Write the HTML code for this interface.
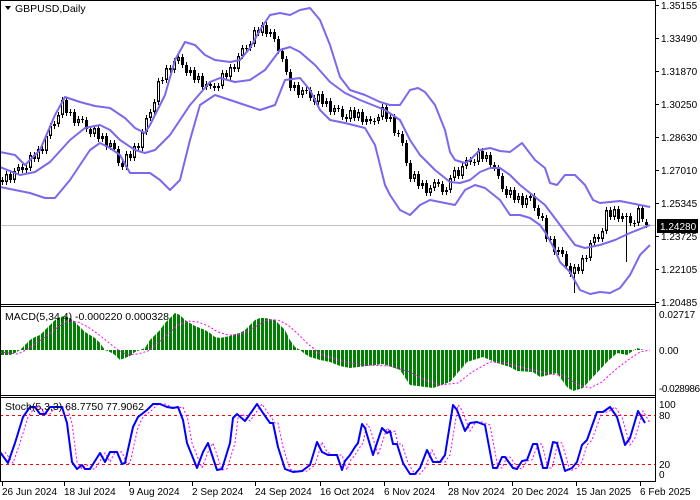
<!DOCTYPE html>
<html><head><meta charset="utf-8"><style>
html,body{margin:0;padding:0;background:#fff;}
svg{display:block;font-family:"Liberation Sans",sans-serif;}
</style></head><body>
<svg width="700" height="500" xmlns="http://www.w3.org/2000/svg">
<defs>
<pattern id="hp" patternUnits="userSpaceOnUse" x="1" y="0" width="4" height="500"><rect x="0" y="0" width="3" height="500" fill="#008000"/></pattern>
<clipPath id="cm"><rect x="0" y="307" width="655" height="88"/></clipPath>
<clipPath id="cs"><rect x="0" y="398" width="655" height="83"/></clipPath>
<clipPath id="cp"><rect x="0" y="1" width="655" height="303"/></clipPath>
</defs>
<rect width="700" height="500" fill="#fff"/>
<!-- ticks -->
<path d="M2.5 481V486M64.5 481V486M129.5 481V486M192.5 481V486M255.5 481V486M320.5 481V486M384.5 481V486M448.5 481V486M512.5 481V486M576.5 481V486M640.5 481V486M655 5.5H659M655 38.5H659M655 71.5H659M655 104.5H659M655 137.5H659M655 170.5H659M655 203.5H659M655 236.5H659M655 269.5H659M655 302.5H659" stroke="#000"/>
<line x1="0" y1="225.5" x2="655" y2="225.5" stroke="#c0c0c0"/>
<line x1="0" y1="415.5" x2="655" y2="415.5" stroke="#f00" stroke-dasharray="3,3"/>
<line x1="0" y1="464.5" x2="655" y2="464.5" stroke="#f00" stroke-dasharray="3,3"/>
<g clip-path="url(#cp)">
<!-- wicks -->
<path stroke="#000" stroke-width="1" fill="none" d="M2.5 177V185M6.5 171V185M10.5 171V183M14.5 168V183M18.5 164V174M22.5 164V173M26.5 165V173M30.5 152V171M34.5 152V162M38.5 146V162M42.5 146V154M46.5 133V154M50.5 123V139M54.5 121V129M58.5 112V127M62.5 97V118M66.5 97V116M70.5 109V116M74.5 109V126M78.5 116V126M82.5 116V123M86.5 117V132M90.5 126V137M94.5 125V137M98.5 125V142M102.5 133V142M106.5 133V150M110.5 140V150M114.5 140V152M118.5 146V166M122.5 160V170M126.5 151V170M130.5 151V161M134.5 143V161M138.5 143V151M142.5 129V151M146.5 115V135M150.5 109V121M154.5 99V115M158.5 78V105M162.5 77V84M166.5 65V83M170.5 65V73M174.5 58V73M178.5 54V64M182.5 54V68M186.5 62V76M190.5 67V76M194.5 67V83M198.5 73V83M202.5 73V90M206.5 81V90M210.5 81V89M214.5 83V91M218.5 83V91M222.5 70V89M226.5 70V80M230.5 64V80M234.5 64V72M238.5 53V72M242.5 45V59M246.5 45V52M250.5 41V51M254.5 27V47M258.5 27V36M262.5 22V36M266.5 22V37M270.5 29V37M274.5 29V42M278.5 36V54M282.5 48V62M286.5 56V75M290.5 69V91M294.5 82V91M298.5 82V98M302.5 87V98M306.5 87V94M310.5 87V101M314.5 95V105M318.5 91V105M322.5 91V107M326.5 98V107M330.5 98V115M334.5 105V115M338.5 105V112M342.5 106V120M346.5 114V122M350.5 107V122M354.5 107V121M358.5 109V121M362.5 109V125M366.5 116V125M370.5 116V124M374.5 118V125M378.5 114V124M382.5 104V120M386.5 104V122M390.5 114V122M394.5 114V136M398.5 130V137M402.5 131V146M406.5 140V166M410.5 160V182M414.5 171V182M418.5 171V189M422.5 180V189M426.5 180V196M430.5 185V196M434.5 179V191M438.5 179V187M442.5 181V195M446.5 187V195M450.5 175V193M454.5 167V181M458.5 167V179M462.5 163V179M466.5 157V169M470.5 157V165M474.5 159V166M478.5 148V165M482.5 148V162M486.5 152V162M490.5 152V168M494.5 162V171M498.5 165V179M502.5 173V192M506.5 186V198M510.5 187V198M514.5 187V203M518.5 193V203M522.5 193V208M526.5 195V208M530.5 193V201M534.5 193V211M538.5 205V219M542.5 213V221M546.5 215V242M550.5 236V243M554.5 236V255M558.5 247V255M562.5 247V257M566.5 251V269M570.5 263V277M574.5 264V293M578.5 264V274M582.5 255V274M586.5 255V262M590.5 240V261M594.5 234V246M598.5 234V242M602.5 228V242M606.5 207V234M610.5 207V220M614.5 206V220M618.5 206V222M622.5 213V222M626.5 213V262M630.5 213V226M634.5 220V227M638.5 205V226M642.5 205V222M646.5 219V228"/>
<!-- black bodies -->
<path stroke="#000" stroke-width="3" fill="none" d="M2.5 180V182M10.5 174V180M22.5 167V170M34.5 155V159M42.5 149V151M66.5 100V113M74.5 112V123M82.5 119V120M86.5 120V129M90.5 129V134M98.5 128V139M106.5 136V147M114.5 143V149M118.5 149V163M122.5 163V167M130.5 154V158M138.5 146V148M170.5 68V70M182.5 57V65M186.5 65V73M194.5 70V80M202.5 76V87M210.5 84V86M214.5 86V88M226.5 73V77M234.5 67V69M246.5 48V49M258.5 30V33M266.5 25V34M274.5 32V39M278.5 39V51M282.5 51V59M286.5 59V72M290.5 72V88M298.5 85V95M306.5 90V91M310.5 90V98M314.5 98V102M322.5 94V104M330.5 101V112M338.5 108V109M342.5 109V117M346.5 117V119M354.5 110V118M362.5 112V122M370.5 119V121M374.5 121V122M386.5 107V119M394.5 117V133M398.5 133V134M402.5 134V143M406.5 143V163M410.5 163V179M418.5 174V186M426.5 183V193M438.5 182V184M442.5 184V192M458.5 170V176M470.5 160V162M474.5 162V163M482.5 151V159M490.5 155V165M494.5 165V168M498.5 168V176M502.5 176V189M506.5 189V195M514.5 190V200M522.5 196V205M534.5 196V208M538.5 208V216M542.5 216V218M546.5 218V239M550.5 239V240M554.5 239V252M562.5 250V254M566.5 254V266M570.5 266V274M578.5 267V271M586.5 258V259M598.5 237V239M610.5 210V217M618.5 209V219M626.5 216V217M630.5 216V223M634.5 223V224M642.5 208V219"/>
<!-- white bodies -->
<path id="wb" stroke="#000" stroke-width="3" fill="none" d="M6.5 174V182M14.5 171V180M18.5 167V171M26.5 168V170M30.5 155V168M38.5 149V159M46.5 136V151M50.5 126V136M54.5 124V126M58.5 115V124M62.5 100V115M70.5 112V113M78.5 119V123M94.5 128V134M102.5 136V139M110.5 143V147M126.5 154V167M134.5 146V158M142.5 132V148M146.5 118V132M150.5 112V118M154.5 102V112M158.5 81V102M162.5 80V81M166.5 68V80M174.5 61V70M178.5 57V61M190.5 70V73M198.5 76V80M206.5 84V87M218.5 86V88M222.5 73V86M230.5 67V77M238.5 56V69M242.5 48V56M250.5 44V48M254.5 30V44M262.5 25V33M270.5 32V34M294.5 85V88M302.5 90V95M318.5 94V102M326.5 101V104M334.5 108V112M350.5 110V119M358.5 112V118M366.5 119V122M378.5 117V121M382.5 107V117M390.5 117V119M414.5 174V179M422.5 183V186M430.5 188V193M434.5 182V188M446.5 190V192M450.5 178V190M454.5 170V178M462.5 166V176M466.5 160V166M478.5 151V162M486.5 155V159M510.5 190V195M518.5 196V200M526.5 198V205M530.5 196V198M558.5 250V252M574.5 267V274M582.5 258V271M590.5 243V258M594.5 237V243M602.5 231V239M606.5 210V231M614.5 209V217M622.5 216V219M638.5 208V223M646.5 222V225"/>
<path stroke="#fff" stroke-width="1" fill="none" d="M6.5 175.5V180.5M14.5 172.5V178.5M18.5 168.5V169.5M30.5 156.5V166.5M38.5 150.5V157.5M46.5 137.5V149.5M50.5 127.5V134.5M58.5 116.5V122.5M62.5 101.5V113.5M78.5 120.5V121.5M94.5 129.5V132.5M102.5 137.5V137.5M110.5 144.5V145.5M126.5 155.5V165.5M134.5 147.5V156.5M142.5 133.5V146.5M146.5 119.5V130.5M150.5 113.5V116.5M154.5 103.5V110.5M158.5 82.5V100.5M166.5 69.5V78.5M174.5 62.5V68.5M178.5 58.5V59.5M190.5 71.5V71.5M198.5 77.5V78.5M206.5 85.5V85.5M222.5 74.5V84.5M230.5 68.5V75.5M238.5 57.5V67.5M242.5 49.5V54.5M250.5 45.5V46.5M254.5 31.5V42.5M262.5 26.5V31.5M294.5 86.5V86.5M302.5 91.5V93.5M318.5 95.5V100.5M326.5 102.5V102.5M334.5 109.5V110.5M350.5 111.5V117.5M358.5 113.5V116.5M366.5 120.5V120.5M378.5 118.5V119.5M382.5 108.5V115.5M414.5 175.5V177.5M422.5 184.5V184.5M430.5 189.5V191.5M434.5 183.5V186.5M450.5 179.5V188.5M454.5 171.5V176.5M462.5 167.5V174.5M466.5 161.5V164.5M478.5 152.5V160.5M486.5 156.5V157.5M510.5 191.5V193.5M518.5 197.5V198.5M526.5 199.5V203.5M574.5 268.5V272.5M582.5 259.5V269.5M590.5 244.5V256.5M594.5 238.5V241.5M602.5 232.5V237.5M606.5 211.5V229.5M614.5 210.5V215.5M622.5 217.5V217.5M638.5 209.5V221.5M646.5 223.5V223.5"/>
<!-- bands -->
<g fill="none" stroke="#7b68ee" stroke-width="2" stroke-linejoin="round">
<polyline points="0,152 15,155 25,165 40,150 55,115 65,97 80,102 95,106 110,108 125,118 135,128 145,133 150,125 165,95 175,60 185,42 195,45 205,55 215,60 230,62 240,60 250,48 260,30 270,15 280,13 290,15 300,10 310,8 320,20 330,45 340,77 350,90 365,95 380,102 390,105 400,105 410,90 418,88 425,92 435,105 445,130 450,152 455,160 465,163 470,160 480,150 490,148 500,151 510,152 522,143 535,160 545,168 550,183 557,185 565,175 575,175 585,185 593,200 600,203 610,202 620,201 630,203 650,207"/>
<polyline points="0,167 20,175 35,172 50,162 70,140 85,128 100,125 110,130 120,140 135,150 145,153 155,150 170,135 190,105 210,82 220,78 235,82 250,80 265,70 280,50 290,47 300,52 315,65 330,82 345,93 360,100 375,106 385,110 400,120 410,140 420,155 435,170 450,182 460,183 470,180 480,172 490,168 500,168 510,175 520,185 530,193 545,205 560,225 575,245 585,248 600,245 615,240 630,233 650,225"/>
<polyline points="0,187 15,190 30,193 45,198 55,198 70,180 90,150 100,143 110,148 120,155 130,173 150,173 160,180 170,190 180,180 190,140 200,105 215,95 230,100 245,105 260,110 275,105 285,80 300,78 310,90 320,110 330,120 345,123 365,128 375,145 380,165 385,185 390,195 400,210 410,215 420,205 430,200 440,202 455,205 465,190 475,185 485,188 500,200 510,215 520,215 530,218 540,225 545,232 555,250 560,262 570,272 580,290 590,294 600,292 610,293 620,288 630,275 640,255 650,245"/>
</g>
</g>
<!-- MACD -->
<g clip-path="url(#cm)">
<polygon fill="url(#hp)" fill-rule="evenodd" points="1,350 1,355 10,355 15,353 20,350 25,345 30,340 35,337 40,335 45,330 50,325 55,320 60,317 65,316 70,318 75,322 80,327 85,332 90,335 95,338 100,343 105,350 110,352 115,355 120,360 125,358 130,356 135,352 140,350 145,348 150,340 155,335 160,330 165,323 170,318 175,313 180,315 185,320 190,323 195,326 200,328 205,330 210,333 215,337 220,338 230,336 235,334 240,333 245,330 250,325 255,320 260,318 265,318 270,319 275,320 280,325 285,330 290,340 295,347 300,350 305,354 310,357 320,360 330,362 340,366 350,368 383,364 400,370 410,385 433,388 450,382 467,362 483,357 497,363 510,367 517,371 533,372 540,377 557,373 567,387 573,391 583,388 593,377 607,362 617,353 627,355 637,348 644,350"/>
<polyline fill="none" stroke="#ff00ff" stroke-width="1" stroke-dasharray="2,2" points="0,352 18,354 28,349 38,342 48,335 58,327 68,321 78,322 88,327 98,334 108,342 118,350 128,355 138,354 148,351 158,343 168,334 178,325 188,321 198,322 208,326 218,332 228,335 238,335 248,331 258,325 268,320 278,320 288,325 298,334 308,344 318,352 328,357 338,360 350,363 365,365 390,366 410,372 425,380 440,385 458,383 472,372 490,362 505,363 520,367 538,371 550,374 565,376 578,385 590,388 602,382 615,370 628,360 640,352 650,350"/>
</g>
<!-- Stoch -->
<g clip-path="url(#cs)">
<polyline fill="none" stroke="#ff00ff" stroke-width="1" stroke-dasharray="2,2" points="5,452 13,463 20,443 28,417 35,407 40,407 45,414 50,414 55,407 67,407 72,423 77,462 82,469 87,465 90,469 95,469 105,453 110,462 115,452 122,452 127,464 130,463 138,427 143,417 152,410 158,404 165,404 172,407 178,408 183,407 188,420 192,443 202,468 208,452 213,443 222,470 227,469 235,443 238,418 242,414 250,421 253,417 262,404 268,413 275,423 278,423 283,447 290,469 298,472 307,471 315,465 322,442 327,452 333,455 342,455 347,470 350,461 355,455 360,447 363,443 367,424 370,428 378,455 387,428 392,433 395,431 398,444 402,444 408,463 415,474 420,474 425,468 432,450 438,462 445,462 450,455 458,405 462,410 470,431 475,423 482,422 490,425 498,468 502,468 507,457 510,457 518,468 522,469 527,461 532,460 538,444 542,444 548,468 552,468 558,442 562,443 570,471 577,468 582,462 587,445 592,440 602,412 608,412 615,407 622,417 630,445 635,438 643,411 650,423"/>
<polyline fill="none" stroke="#0000ff" stroke-width="2" stroke-linejoin="round" points="0,452 8,463 15,443 23,417 30,407 35,407 40,414 45,414 50,407 62,407 67,423 72,462 77,469 82,465 85,469 90,469 100,453 105,462 110,452 117,452 122,464 125,463 133,427 138,417 147,410 153,404 160,404 167,407 173,408 178,407 183,420 187,443 197,468 203,452 208,443 217,470 222,469 230,443 233,418 237,414 245,421 248,417 257,404 263,413 270,423 273,423 278,447 285,469 293,472 302,471 310,465 317,442 322,452 328,455 337,455 342,470 345,461 350,455 355,447 358,443 362,424 365,428 373,455 382,428 387,433 390,431 393,444 397,444 403,463 410,474 415,474 420,468 427,450 433,462 440,462 445,455 453,405 457,410 465,431 470,423 477,422 485,425 493,468 497,468 502,457 505,457 513,468 517,469 522,461 527,460 533,444 537,444 543,468 547,468 553,442 557,443 565,471 572,468 577,462 582,445 587,440 597,412 603,412 610,407 617,417 625,445 630,438 638,411 645,423"/>
</g>
<!-- frames -->
<line x1="0.5" y1="0" x2="0.5" y2="481" stroke="#000"/>
<line x1="0" y1="0.5" x2="655" y2="0.5" stroke="#000"/>
<line x1="655.5" y1="0" x2="655.5" y2="482" stroke="#000"/>
<line x1="0" y1="304.5" x2="655" y2="304.5" stroke="#000"/>
<line x1="0" y1="306.5" x2="655" y2="306.5" stroke="#000"/>
<line x1="0" y1="395.5" x2="655" y2="395.5" stroke="#000"/>
<line x1="0" y1="397.5" x2="655" y2="397.5" stroke="#000"/>
<line x1="0" y1="481.5" x2="655" y2="481.5" stroke="#000"/>
<polygon points="5,6 11,6 8,10" fill="#000"/>
<text x="15" y="12" font-size="10.5">GBPUSD,Daily</text>
<text x="5" y="320" font-size="10.5">MACD(5,34,4) -0.000220 0.000328</text>
<text x="5" y="410" font-size="10.5">Stoch(5,3,3) 68.7750 77.9062</text>
<g font-size="10" fill="#000">
<text x="661" y="9">1.35155</text>
<text x="661" y="42">1.33490</text>
<text x="661" y="75">1.31870</text>
<text x="661" y="108">1.30250</text>
<text x="661" y="141">1.28630</text>
<text x="661" y="174">1.27010</text>
<text x="661" y="207">1.25345</text>
<text x="661" y="240">1.23725</text>
<text x="661" y="273">1.22105</text>
<text x="661" y="306">1.20485</text>
<text x="659" y="318">0.02717</text>
<text x="659" y="354">0.00</text>
<text x="659" y="392" textLength="41">-0.028986</text>
<text x="659" y="408">100</text>
<text x="659" y="419">80</text>
<text x="659" y="468">20</text>
<text x="659" y="478">0</text>
</g>
<rect x="657" y="219" width="41" height="14" fill="#000"/>
<text x="660" y="230" font-size="10" fill="#fff">1.24280</text>
<g font-size="10">
<text x="2" y="495">26 Jun 2024</text>
<text x="64" y="495">18 Jul 2024</text>
<text x="129" y="495">9 Aug 2024</text>
<text x="192" y="495">2 Sep 2024</text>
<text x="255" y="495">24 Sep 2024</text>
<text x="320" y="495">16 Oct 2024</text>
<text x="384" y="495">6 Nov 2024</text>
<text x="448" y="495">28 Nov 2024</text>
<text x="512" y="495">20 Dec 2024</text>
<text x="576" y="495">15 Jan 2025</text>
<text x="640" y="495">6 Feb 2025</text>
</g>
</svg>
</body></html>
